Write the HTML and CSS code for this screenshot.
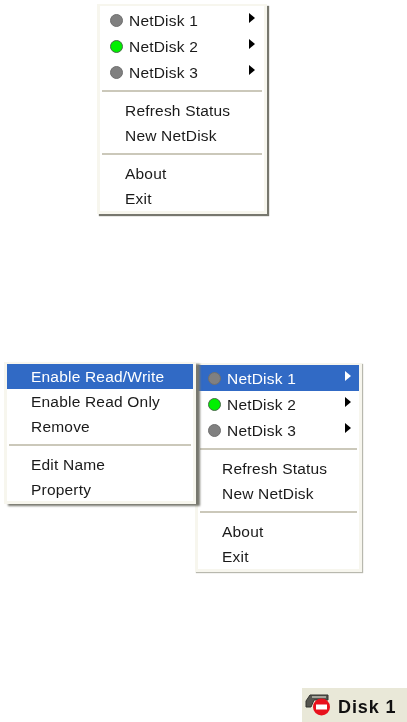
FILE: index.html
```html
<!DOCTYPE html>
<html lang="en">
<head>
    <meta charset="UTF-8">
    <title>NetDisk menus</title>
    <link rel="stylesheet" href="styles.css">
</head>
<body>

    <div class="menu menu-top">
        <div class="item disk"><span class="dot"></span>NetDisk 1<span class="arrow"></span></div>
        <div class="item disk"><span class="dot on"></span>NetDisk 2<span class="arrow"></span></div>
        <div class="item disk"><span class="dot"></span>NetDisk 3<span class="arrow"></span></div>
        <div class="sep"></div>
        <div class="item">Refresh Status</div>
        <div class="item">New NetDisk</div>
        <div class="sep"></div>
        <div class="item">About</div>
        <div class="item">Exit</div>
    </div>

    <div class="menu-pair">
        <div class="menu menu-sub">
            <div class="item active">Enable Read/Write</div>
            <div class="item">Enable Read Only</div>
            <div class="item">Remove</div>
            <div class="sep"></div>
            <div class="item">Edit Name</div>
            <div class="item">Property</div>
        </div>
        <div class="menu menu-main">
            <div class="item disk active"><span class="dot"></span>NetDisk 1<span class="arrow"></span></div>
            <div class="item disk"><span class="dot on"></span>NetDisk 2<span class="arrow"></span></div>
            <div class="item disk"><span class="dot"></span>NetDisk 3<span class="arrow"></span></div>
            <div class="sep"></div>
            <div class="item">Refresh Status</div>
            <div class="item">New NetDisk</div>
            <div class="sep"></div>
            <div class="item">About</div>
            <div class="item">Exit</div>
        </div>
    </div>

    <div class="disk-label">
        <svg class="disk-icon" width="26" height="24" viewBox="0 0 26 24">
            <path d="M1 8 L5 2 H23 V7 H9 L6 14 H1 Z" fill="#55554f" stroke="#33332f"/>
            <path d="M7 3 H21 V5 H7 Z" fill="#a4a49a"/>
            <circle cx="16.5" cy="14" r="8.5" fill="#e8101c"/>
            <rect x="11" y="11.5" width="11" height="5" fill="#fff"/>
        </svg>
        <span>Disk 1</span>
    </div>

</body>
</html>
```

FILE: styles.css
```css
html, body {
    height: 100%;
}

body {
    margin: 0;
    background-color: #fff;
    color: #1a1a1a;
    font-family: "Liberation Sans", Arial, sans-serif;
    font-size: 15.5px;
    letter-spacing: 0.2px;
    overflow: hidden;
}

.menu {
    box-sizing: border-box;
    background-color: #fff;
    border: 3px solid #f7f6ee;
    border-top-width: 2px;
    box-shadow: 2px 2px 1px #77776e;
    filter: blur(0.35px);
}

.menu-top {
    width: 170px;
    height: 210px;
    margin: 4px 0 0 97px;
    padding-top: 1px;
}

.menu-pair {
    display: flex;
    align-items: flex-start;
    margin: 149px 0 0 4px;
}

.menu-sub {
    position: relative;
    z-index: 1;
    flex: none;
    width: 192px;
    height: 142px;
    margin: -1px -1px 0 0;
    box-shadow: 4px 2px 2px #77776e;
}

.menu-main {
    flex: none;
    width: 167px;
    height: 209px;
    box-shadow: 1px 1px 1px #b8b8ae;
}

.item {
    height: 25px;
    line-height: 25px;
    white-space: nowrap;
}

.menu-top .item {
    padding-left: 25px;
}

.menu-main .item {
    padding-left: 24px;
}

.menu-sub .item {
    padding-left: 24px;
}

.menu-main .item.disk,
.menu-top .item.disk {
    display: flex;
    align-items: center;
    padding-left: 10px;
    height: 26px;
}

.item.active {
    background-color: #316ac5;
    color: #fff;
}

.dot {
    flex: none;
    width: 11px;
    height: 11px;
    margin-right: 6px;
    border-radius: 50%;
    border: 1px solid #6f6f6f;
    background-color: #808080;
}

.dot.on {
    background-color: #00f000;
    border-color: #4a6a4a;
}

.arrow {
    width: 0;
    height: 0;
    margin-left: auto;
    margin-right: 9px;
    margin-top: -4px;
    border-left: 6px solid #000;
    border-top: 5px solid transparent;
    border-bottom: 5px solid transparent;
}

.menu-main .arrow {
    margin-right: 8px;
}

.active .arrow {
    border-left-color: #fff;
}

.sep {
    height: 2px;
    margin: 5px 2px 6px 2px;
    background-color: #cbc8ba;
}

.disk-label {
    position: absolute;
    left: 302px;
    top: 688px;
    width: 105px;
    height: 34px;
    box-sizing: border-box;
    display: flex;
    align-items: center;
    padding: 4px 0 0 3px;
    background-color: #e9e8d8;
    color: #111;
    font-size: 18px;
    font-weight: bold;
    letter-spacing: 0.9px;
    filter: blur(0.35px);
}

.disk-icon {
    flex: none;
    margin: -4px 7px 0 0;
}
```
